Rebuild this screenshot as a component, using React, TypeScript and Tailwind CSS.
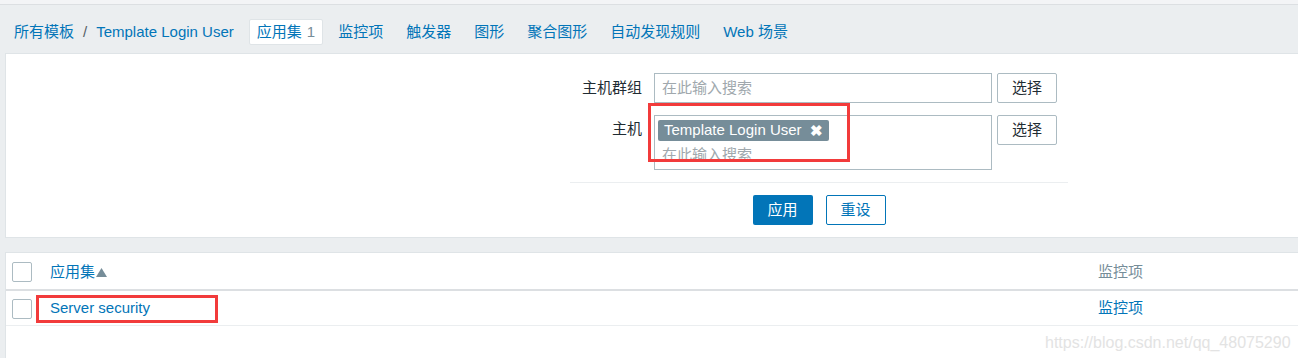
import React from "react"

const tabs = ["监控项", "触发器", "图形", "聚合图形", "自动发现规则", "Web 场景"]

function Checkbox() {
  return <div className="h-[20px] w-[20px] rounded-[2px] border border-[#acbbc2] bg-white" />
}

function SelectButton() {
  return (
    <button className="ml-[5px] h-[30px] w-[60px] rounded-[2px] border border-[#acbbc2] bg-white text-[15px] text-[#1f2c33]">
      选择
    </button>
  )
}

export default function App() {
  return (
    <div
      className="relative h-[358px] w-[1298px] overflow-hidden bg-[#ebeef0] text-[15px] text-[#1f2c33]"
      style={{ fontFamily: '"Liberation Sans", "Noto Sans CJK SC", sans-serif' }}
    >
      {/* top strip */}
      <div className="h-[5px] border-b border-[#dcdfe2] bg-[#f3f4f6]" />

      {/* breadcrumbs + tabs */}
      <div className="flex h-[48px] items-center pl-[14px] pt-[6px]">
        <div className="mr-[15px] flex items-center text-[#0275b8]">
          <span>所有模板</span>
          <span className="mx-[9px] text-[#555f66]">/</span>
          <span>Template Login User</span>
        </div>
        <div className="flex items-center gap-[7px]">
          <div className="flex h-[26px] items-center rounded-[2px] border border-[#dfe4e7] bg-white px-[7px] text-[#0275b8]">
            应用集<span className="ml-[5px] text-[#768d99]">1</span>
          </div>
          {tabs.map((t) => (
            <div key={t} className="px-[8px] text-[#0275b8]">
              {t}
            </div>
          ))}
        </div>
      </div>

      {/* filter panel */}
      <div className="ml-[5px] h-[185px] border border-r-0 border-[#dfe4e7] bg-white">
        <div className="ml-[564px] w-[498px] pt-[19px]">
          <div className="flex items-center">
            <div className="w-[72px] text-right">主机群组</div>
            <div className="ml-[12px] flex h-[30px] w-[338px] items-center border border-[#acbbc2] px-[7px] text-[#a0a8ad]">
              在此输入搜索
            </div>
            <SelectButton />
          </div>
          <div className="mt-[12px] flex items-start">
            <div className="flex h-[29px] w-[72px] items-center justify-end">主机</div>
            <div className="ml-[12px] h-[55px] w-[338px] border border-[#acbbc2] px-[3px] pt-[3px]">
              <div className="inline-flex h-[21px] items-center rounded-[2px] bg-[#768d99] pl-[6px] pr-[6px] text-white">
                Template Login User
                <span className="ml-[8px] text-[15px] font-bold leading-none">✖</span>
              </div>
              <div className="mt-[2px] pl-[4px] text-[#a0a8ad]">在此输入搜索</div>
            </div>
            <SelectButton />
          </div>
          <div className="mt-[12px] border-t border-[#ebeef0]" />
          <div className="mt-[12px] flex justify-center gap-[13px]">
            <button className="h-[30px] w-[60px] rounded-[2px] bg-[#0275b8] text-[15px] text-white">应用</button>
            <button className="h-[30px] w-[60px] rounded-[2px] border border-[#0275b8] bg-white text-[15px] text-[#0275b8]">
              重设
            </button>
          </div>
        </div>
      </div>

      {/* table panel */}
      <div className="ml-[5px] mt-[14px] h-[120px] border-l border-t border-[#dfe4e7] bg-white">
        <div className="flex h-[38px] items-center border-b-2 border-[#dcdfe2] pt-[2px]">
          <div className="w-[44px] pl-[6px]">
            <Checkbox />
          </div>
          <div className="flex flex-1 items-center text-[#0275b8]">
            应用集
            <svg width="11" height="9" viewBox="0 0 11 9" className="ml-[1px] mt-[1px]">
              <path d="M5.5 0L11 9H0z" fill="#768d99" />
            </svg>
          </div>
          <div className="w-[200px] text-[#768d99]">监控项</div>
        </div>
        <div className="flex h-[35px] items-center border-b border-[#ebeef0] pt-[1px]">
          <div className="w-[44px] pl-[6px]">
            <Checkbox />
          </div>
          <div className="flex-1 text-[#0275b8]">Server security</div>
          <div className="w-[200px] text-[#0275b8]">监控项</div>
        </div>
      </div>

      {/* red annotation boxes */}
      <div className="absolute left-[648px] top-[103px] h-[59px] w-[202px] border-[3px] border-[#f23b3b]" />
      <div className="absolute left-[36px] top-[295px] h-[28px] w-[182px] border-[3px] border-[#f23b3b]" />

      {/* watermark */}
      <div className="absolute left-[1045px] top-[331px] text-[16px] text-[#e3e3e3]">
        https://blog.csdn.net/qq_48075290
      </div>
    </div>
  )
}
